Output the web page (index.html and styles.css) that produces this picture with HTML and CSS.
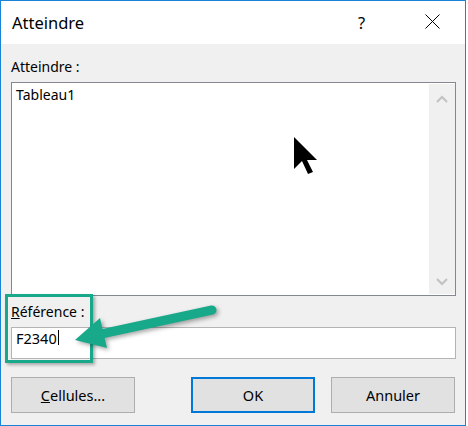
FILE: index.html
```html
<!DOCTYPE html>
<html lang="fr">
<head>
<meta charset="UTF-8" />
<meta name="viewport" content="width=device-width, initial-scale=1" />
<title>Atteindre</title>
<link rel="stylesheet" href="styles.css">
</head>
<body>
  <div class="dialog">
    <div class="titlebar">
      <span class="title">Atteindre</span>
      <span class="help">?</span>
      <svg class="close" width="15" height="15" viewBox="0 0 15 15">
        <path d="M0.5 0.5 L14.5 14.5 M14.5 0.5 L0.5 14.5" stroke="#000" stroke-width="1" fill="none" />
      </svg>
    </div>

    <div class="content">
      <div class="label">Atteindre :</div>
      <div class="listbox">
        <div class="items">
          <div class="item">Tableau1</div>
        </div>
        <div class="scrollbar">
          <svg width="12" height="8" viewBox="0 0 12 8">
            <path d="M1 7 L6 2 L11 7" stroke="#c2c2c2" stroke-width="2" fill="none" />
          </svg>
          <svg width="12" height="8" viewBox="0 0 12 8">
            <path d="M1 1 L6 6 L11 1" stroke="#c2c2c2" stroke-width="2" fill="none" />
          </svg>
        </div>
      </div>

      <div class="label ref-label"><u>R</u>éférence :</div>
      <div class="input">F2340<span class="caret"></span></div>

      <div class="buttons">
        <button class="btn"><u>C</u>ellules...</button>
        <button class="btn btn-default">OK</button>
        <button class="btn">Annuler</button>
      </div>
    </div>

    <!-- annotation: highlight + arrow -->
    <div class="highlight"></div>
    <svg class="annot" width="468" height="426" viewBox="0 0 468 426">
      <line x1="101" y1="334" x2="212" y2="310" stroke="#17a98a" stroke-width="9" stroke-linecap="round" />
      <polygon points="75,340 100,318 107,348" fill="#17a98a" />
    </svg>

    <!-- mouse pointer -->
    <svg class="pointer" width="24" height="38" viewBox="0 0 24 38">
      <path d="M0 0 L0 32 L8 24 L14 37 L19 35 L13 23 L23 23 Z" fill="#000" />
    </svg>
  </div>
</body>
</html>
```

FILE: styles.css
```css
body {
  margin: 0;
  background: #fff;
  font-family: "Noto Sans", "Open Sans", sans-serif;
  color: #000;
}
.dialog {
  position: relative;
  width: 464px;
  height: 424px;
  border: 1px solid #1883d7;
  background: #f0f0f0;
}
.titlebar {
  height: 43px;
  background: #fff;
  display: flex;
  align-items: center;
  padding-left: 11px;
}
.title {
  font-size: 16.5px;
}
.help {
  margin-left: auto;
  font-size: 16.5px;
  width: 10px;
  margin-top: -1px;
}
.close {
  margin-left: 57px;
  margin-right: 25px;
  margin-top: -2px;
}
.content {
  padding: 13px 9px 0 10px;
  font-size: 14px;
}
.label {
  line-height: 20px;
  height: 20px;
}
.listbox {
  margin-top: 5px;
  height: 212px;
  border: 1px solid #828790;
  background: #fff;
  display: flex;
}
.items {
  flex: 1;
  padding: 2px 4px;
}
.item {
  line-height: 20px;
}
.scrollbar {
  width: 26px;
  margin: 1px 0;
  background: #f0f0f0;
  display: flex;
  flex-direction: column;
  justify-content: space-between;
  align-items: center;
  padding: 11px 0 8px;
  box-sizing: border-box;
}
.ref-label {
  margin-top: 6px;
}
.input {
  margin-top: 5px;
  border: 1px solid #b4b4b4;
  background: #fff;
  font-size: 14.5px;
  line-height: 16px;
  padding: 2px 4px 0;
  box-sizing: border-box;
  height: 32px;
  display: flex;
  align-items: flex-start;
}
.caret {
  display: inline-block;
  width: 1px;
  height: 15px;
  background: #000;
  margin-left: 1px;
  margin-top: 0;
}
.buttons {
  margin-top: 18px;
  display: flex;
  padding-right: 1px;
}
.btn {
  width: 124px;
  height: 36px;
  background: #e1e1e1;
  border: 1px solid #adadad;
  font-family: inherit;
  font-size: 14.5px;
  color: #000;
  padding: 0;
}
.btn-default {
  margin-left: auto;
  margin-right: 16px;
  border: 2px solid #0078d7;
}
.highlight {
  position: absolute;
  left: 4px;
  top: 293px;
  width: 88px;
  height: 69px;
  box-sizing: border-box;
  border: 3px solid #17a98a;
  box-shadow: 2px 2px 3px rgba(0, 0, 0, 0.3);
}
.annot {
  position: absolute;
  left: -1px;
  top: -1px;
  filter: drop-shadow(2px 2px 2px rgba(0, 0, 0, 0.35));
}
.pointer {
  position: absolute;
  left: 293px;
  top: 136px;
}
```
